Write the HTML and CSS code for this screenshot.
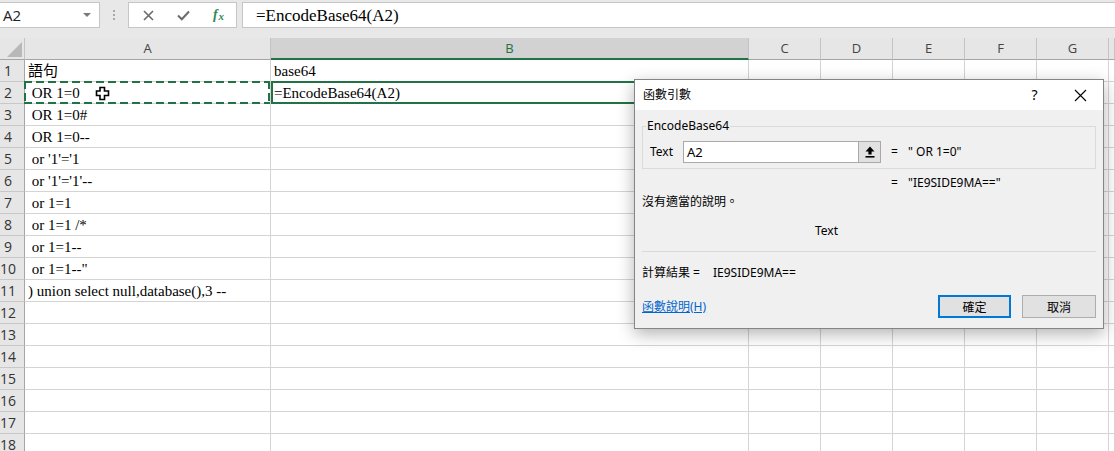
FILE: index.html
```html
<!DOCTYPE html>
<html lang="zh-Hant">
<head>
    <meta charset="UTF-8">
    <title>EncodeBase64 - Excel</title>
    <link rel="stylesheet" href="styles.css">
</head>
<body>

    <!-- 公式列 -->
    <div class="formula-bar">
        <div class="name-box"><span>A2</span><span class="caret"></span></div>
        <div class="grip"><i></i><i></i><i></i></div>
        <div class="fx-buttons">
            <span class="fx-slot">
                <svg width="11" height="11" viewBox="0 0 11 11"><path d="M1 1L10 10M10 1L1 10" stroke="#6b6b6b" stroke-width="1.6" fill="none"/></svg>
            </span>
            <span class="fx-slot">
                <svg width="13" height="11" viewBox="0 0 13 11"><path d="M1 5.5L4.8 9.3L12 1.5" stroke="#6b6b6b" stroke-width="2" fill="none"/></svg>
            </span>
            <span class="fx-slot fx">f<span class="fx-x">x</span></span>
        </div>
        <div class="formula">=EncodeBase64(A2)</div>
    </div>

    <!-- 工作表 -->
    <div class="sheet">
        <div class="grid">
            <div class="hd corner"></div><div class="hd">A</div><div class="hd on">B</div><div class="hd">C</div><div class="hd">D</div><div class="hd">E</div><div class="hd">F</div><div class="hd">G</div><div class="hd"></div>

            <div class="rh">1</div><div class="c">語句</div><div class="c">base64</div><div></div><div></div><div></div><div></div><div></div><div></div>
            <div class="rh">2</div><div class="c copy"> OR 1=0<svg class="cursor" width="15" height="15" viewBox="0 0 15 15"><path d="M5 1.5h4.5v3.5h4v4.5h-4v4h-4.5v-4h-3.5v-4.5h3.5z" fill="#fff" stroke="#000" stroke-width="1.6"/></svg></div><div class="c sel">=EncodeBase64(A2)</div><div></div><div></div><div></div><div></div><div></div><div></div>
            <div class="rh">3</div><div class="c"> OR 1=0#</div><div></div><div></div><div></div><div></div><div></div><div></div><div></div>
            <div class="rh">4</div><div class="c"> OR 1=0--</div><div></div><div></div><div></div><div></div><div></div><div></div><div></div>
            <div class="rh">5</div><div class="c"> or '1'='1</div><div></div><div></div><div></div><div></div><div></div><div></div><div></div>
            <div class="rh">6</div><div class="c"> or '1'='1'--</div><div></div><div></div><div></div><div></div><div></div><div></div><div></div>
            <div class="rh">7</div><div class="c"> or 1=1</div><div></div><div></div><div></div><div></div><div></div><div></div><div></div>
            <div class="rh">8</div><div class="c"> or 1=1 /*</div><div></div><div></div><div></div><div></div><div></div><div></div><div></div>
            <div class="rh">9</div><div class="c"> or 1=1--</div><div></div><div></div><div></div><div></div><div></div><div></div><div></div>
            <div class="rh">10</div><div class="c"> or 1=1--"</div><div></div><div></div><div></div><div></div><div></div><div></div><div></div>
            <div class="rh">11</div><div class="c">) union select null,database(),3 --</div><div></div><div></div><div></div><div></div><div></div><div></div><div></div>
            <div class="rh">12</div><div></div><div></div><div></div><div></div><div></div><div></div><div></div><div></div>
            <div class="rh">13</div><div></div><div></div><div></div><div></div><div></div><div></div><div></div><div></div>
            <div class="rh">14</div><div></div><div></div><div></div><div></div><div></div><div></div><div></div><div></div>
            <div class="rh">15</div><div></div><div></div><div></div><div></div><div></div><div></div><div></div><div></div>
            <div class="rh">16</div><div></div><div></div><div></div><div></div><div></div><div></div><div></div><div></div>
            <div class="rh">17</div><div></div><div></div><div></div><div></div><div></div><div></div><div></div><div></div>
            <div class="rh">18</div><div></div><div></div><div></div><div></div><div></div><div></div><div></div><div></div>
        </div>

        <!-- 函數引數 對話方塊 -->
        <div class="dialog">
            <div class="dlg-title">
                <span class="dlg-name">函數引數</span>
                <span class="dlg-btn">?</span>
                <span class="dlg-btn"><svg width="13" height="13" viewBox="0 0 13 13"><path d="M1 1L12 12M12 1L1 12" stroke="#000" stroke-width="1.1" fill="none"/></svg></span>
            </div>
            <div class="dlg-body">
                <fieldset class="args">
                    <legend>EncodeBase64</legend>
                    <div class="arg-row">
                        <span class="arg-label">Text</span>
                        <div class="ref-input">
                            <span class="ref-text">A2</span>
                            <span class="ref-btn"><svg width="10" height="12" viewBox="0 0 10 12"><path d="M5 0.5L9.5 5.5H6.6V8.5H3.4V5.5H0.5Z" fill="#000"/><rect x="0.5" y="10" width="9" height="1.6" fill="#000"/></svg></span>
                        </div>
                        <span class="eq">=</span>
                        <span class="val">" OR 1=0"</span>
                    </div>
                </fieldset>
                <div class="result-row"><span class="eq">=</span><span class="val">"IE9SIDE9MA=="</span></div>
                <p class="desc">沒有適當的說明。</p>
                <p class="arg-help">Text</p>
                <hr class="sep">
                <p class="calc"><span class="calc-label">計算結果 =</span>IE9SIDE9MA==</p>
                <div class="dlg-foot">
                    <a href="#" class="help-link">函數說明(H)</a>
                    <div class="btns">
                        <button class="btn ok">確定</button>
                        <button class="btn">取消</button>
                    </div>
                </div>
            </div>
        </div>
    </div>

</body>
</html>
```

FILE: styles.css
```css
html, body {
    margin: 0;
    padding: 0;
    overflow: hidden;
}
body {
    background: #fff;
    font-family: "Liberation Serif", "Noto Sans CJK TC", serif;
    color: #000;
}

/* 公式列 */
.formula-bar {
    display: flex;
    align-items: flex-start;
    height: 38px;
    padding-top: 2px;
    box-sizing: border-box;
    background: #e8e8e8;
}
.name-box {
    width: 100px;
    height: 26px;
    box-sizing: border-box;
    background: #fff;
    border: 1px solid #c6c6c6;
    border-left: 0;
    display: flex;
    align-items: center;
    justify-content: space-between;
    padding: 0 8px 0 3px;
    font: 15px "Open Sans", sans-serif;
    color: #222;
}
.caret {
    width: 0;
    height: 0;
    border-left: 4px solid transparent;
    border-right: 4px solid transparent;
    border-top: 4px solid #7a7a7a;
}
.grip {
    width: 28px;
    display: flex;
    flex-direction: column;
    align-items: center;
    gap: 2px;
    padding-top: 8px;
}
.grip i {
    width: 2px;
    height: 2px;
    background: #a8a8a8;
}
.fx-buttons {
    width: 109px;
    height: 26px;
    box-sizing: border-box;
    background: #fff;
    border: 1px solid #c6c6c6;
    display: flex;
    align-items: center;
    padding-left: 2px;
}
.fx-slot {
    width: 35px;
    display: flex;
    justify-content: center;
}
.fx {
    align-items: baseline;
    font: italic bold 14px/16px "Liberation Serif", serif;
    color: #2f8a57;
}
.fx-x {
    font-size: 11px;
    margin-left: 1px;
    position: relative;
    top: 1px;
}
.formula {
    flex: 1;
    margin-left: 5px;
    height: 26px;
    box-sizing: border-box;
    background: #fff;
    border: 1px solid #c6c6c6;
    border-right: 0;
    padding-left: 13px;
    font-size: 17px;
    line-height: 25px;
}

/* 工作表 */
.sheet {
    position: relative;
}
.grid {
    display: grid;
    grid-template-columns: 25px 246px 478px repeat(5, 72px) 1fr;
    grid-auto-rows: 22px;
}
.grid > div {
    box-sizing: border-box;
    border-right: 1px solid #d4d4d4;
    border-bottom: 1px solid #d4d4d4;
}
.grid > .hd {
    background: #e6e6e6;
    border-right-color: #c4c4c4;
    border-bottom-color: #a6a6a6;
    text-align: center;
    font: 13px/21px "Open Sans", sans-serif;
    color: #444;
}
.grid > .hd.on {
    background: #d2d2d2;
    color: #217346;
    border-bottom: 2px solid #217346;
}
.grid > .corner {
    position: relative;
    background: #e6e6e6;
}
.corner::after {
    content: "";
    position: absolute;
    right: 2px;
    bottom: 2px;
    width: 15px;
    height: 15px;
    background: #b8b8b8;
    clip-path: polygon(100% 0, 100% 100%, 0 100%);
}
.grid > .rh {
    background: #e6e6e6;
    border-right-color: #a6a6a6;
    border-bottom-color: #c8c8c8;
    font: 14px/21px "Open Sans", sans-serif;
    color: #333;
    text-align: center;
    padding-right: 8px;
}
.c {
    position: relative;
    font-size: 15px;
    line-height: 23px;
    padding-left: 3px;
    white-space: pre;
}
.copy::after {
    content: "";
    position: absolute;
    left: -1px;
    top: -1px;
    right: 0;
    bottom: -1px;
    background:
        repeating-linear-gradient(90deg, #217346 0 8px, transparent 8px 12px) top / 100% 2px no-repeat,
        repeating-linear-gradient(90deg, #217346 0 8px, transparent 8px 12px) bottom / 100% 2px no-repeat,
        repeating-linear-gradient(180deg, #217346 0 8px, transparent 8px 12px) left / 2px 100% no-repeat,
        repeating-linear-gradient(180deg, #217346 0 8px, transparent 8px 12px) right / 2px 100% no-repeat;
}
.sel::after {
    content: "";
    position: absolute;
    left: 0;
    top: -1px;
    right: -1px;
    bottom: -1px;
    border: 2px solid #217346;
}
.cursor {
    position: absolute;
    left: 70px;
    top: 4px;
}

/* 對話方塊 */
.dialog {
    position: absolute;
    left: 634px;
    top: 41px;
    width: 470px;
    height: 250px;
    box-sizing: border-box;
    border: 1px solid #858585;
    background: #f0f0f0;
    box-shadow: 0 5px 16px rgba(0, 0, 0, 0.3);
    font: 12px/16px "Noto Sans", "Noto Sans CJK TC", sans-serif;
    color: #000;
}
.dlg-title {
    display: flex;
    align-items: center;
    height: 30px;
    background: #fff;
    padding-left: 8px;
}
.dlg-name {
    flex: 1;
}
.dlg-btn {
    width: 45px;
    display: flex;
    justify-content: center;
    font-size: 14px;
}
.dlg-btn:last-child {
    width: 46px;
}
.dlg-body {
    padding: 8px 7px 0 7px;
}
.args {
    margin: 0;
    padding: 7px 7px 5px 7px;
    border: 1px solid #dadada;
}
.args legend {
    margin-left: -4px;
    padding: 0 1px;
}
.arg-row {
    display: flex;
    align-items: center;
    height: 22px;
}
.arg-label {
    width: 33px;
}
.ref-input {
    display: flex;
    width: 198px;
    height: 22px;
    box-sizing: border-box;
    border: 1px solid #a9a9a9;
    background: #fff;
}
.ref-text {
    flex: 1;
    padding-left: 3px;
    font-size: 13px;
    line-height: 20px;
}
.ref-btn {
    width: 21px;
    border-left: 1px solid #a9a9a9;
    background: #e1e1e1;
    display: flex;
    align-items: center;
    justify-content: center;
}
.eq {
    width: 27px;
    text-align: center;
}
.result-row {
    display: flex;
    margin-top: 6px;
    padding-left: 239px;
}
.desc {
    margin: 3px 0 0;
}
.arg-help {
    margin: 13px 0 0;
    padding-left: 173px;
}
.sep {
    margin: 12px 0 0;
    border: 0;
    border-top: 1px solid #d9d9d9;
}
.calc {
    margin: 13px 0 0;
}
.calc-label {
    display: inline-block;
    width: 71px;
}
.dlg-foot {
    display: flex;
    align-items: center;
    justify-content: space-between;
    margin-top: 14px;
}
.help-link {
    color: #0066cc;
    text-decoration: underline;
}
.btns {
    display: flex;
    gap: 11px;
}
.btn {
    width: 74px;
    height: 23px;
    box-sizing: border-box;
    border: 1px solid #adadad;
    background: #e1e1e1;
    font: 12px "Noto Sans CJK TC", sans-serif;
    color: #000;
    padding: 0;
}
.btn.ok {
    width: 73px;
    border: 2px solid #0078d7;
}
```
